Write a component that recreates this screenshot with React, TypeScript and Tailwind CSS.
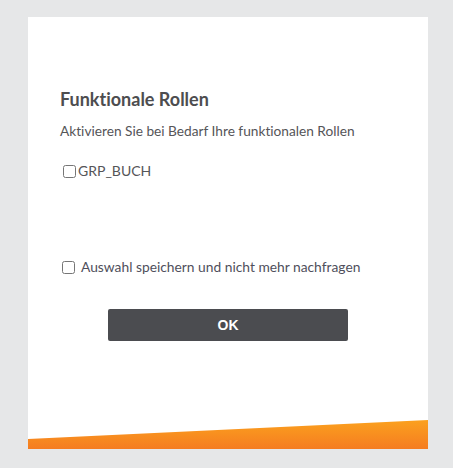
import React from 'react';

const font = { fontFamily: 'Lato, "Open Sans", sans-serif' };

export default function App() {
  return (
    <div
      className="min-h-[468px] w-[453px] bg-[#e6e7e8] pt-[17px] pl-[28px] [font-variant-ligatures:none]"
      style={font}
    >
      <div className="relative flex h-[432px] w-[400px] flex-col bg-white pl-[32px]">
        <h2 className="mt-[69px] text-[18px] font-bold leading-[26px] text-[#4d4d4f]">Funktionale Rollen</h2>
        <p className="mt-[9px] text-[13.7px] leading-[20px] text-[#555558]">
          Aktivieren Sie bei Bedarf Ihre funktionalen Rollen
        </p>

        <label className="mt-[20px] flex items-center gap-[2px] text-[14px] leading-[20px] text-[#555558]">
          <input type="checkbox" className="ml-[3px] h-[13px] w-[13px]" />
          GRP_BUCH
        </label>

        <label className="mt-[76px] flex items-center gap-[6px] text-[13.8px] leading-[20px] text-[#4f4f5c]">
          <input type="checkbox" className="ml-[2px] h-[13px] w-[13px]" />
          Auswahl speichern und nicht mehr nachfragen
        </label>

        <button
          type="button"
          className="mt-[32px] ml-[48px] h-[32px] w-[240px] rounded-[2px] bg-[#4b4c50] text-[14px] font-bold text-white"
          style={{ fontFamily: '"Liberation Sans", Arial, sans-serif' }}
        >
          OK
        </button>

        <svg
          className="absolute bottom-0 left-0"
          width="400"
          height="29"
          viewBox="0 0 400 29"
          preserveAspectRatio="none"
        >
          <defs>
            <linearGradient id="wedge" x1="0" y1="0" x2="0" y2="1">
              <stop offset="0" stopColor="#fba11e" />
              <stop offset="1" stopColor="#f57c21" />
            </linearGradient>
          </defs>
          <polygon points="0,19 400,0 400,29 0,29" fill="url(#wedge)" />
        </svg>
      </div>
    </div>
  );
}
